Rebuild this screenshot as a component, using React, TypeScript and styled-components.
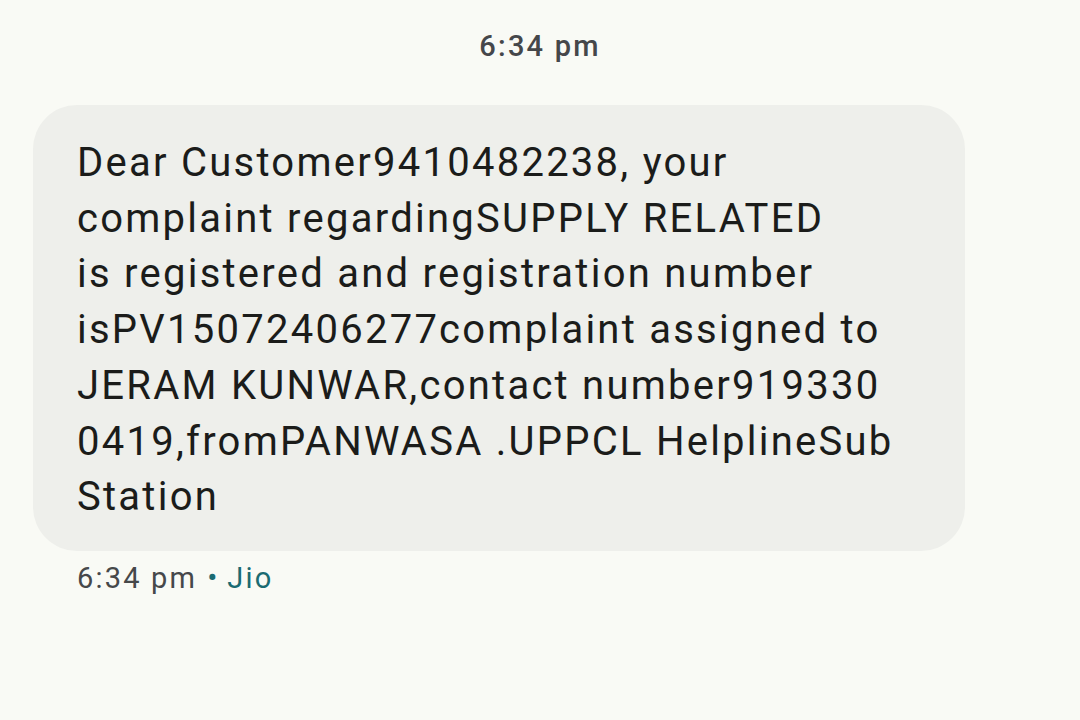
import React from "react";
import styled, { createGlobalStyle } from "styled-components";

const GlobalStyle = createGlobalStyle`
  html, body {
    margin: 0;
    padding: 0;
    background: #f9faf5;
  }
  body {
    font-family: Roboto, "Noto Sans", Arial, sans-serif;
    -webkit-font-smoothing: antialiased;
  }
`;

const Page = styled.div`
  width: 1080px;
  height: 720px;
  box-sizing: border-box;
  background: #f9faf5;
  padding: 28px 0 0 33px;
  display: flex;
  flex-direction: column;
  align-items: flex-start;
`;

const DayTime = styled.div`
  align-self: stretch;
  margin-left: -33px;
  text-align: center;
  font-size: 29px;
  letter-spacing: 2.2px;
  line-height: 36px;
  font-weight: 500;
  color: #45474a;
  margin-bottom: 41px;
`;

const Bubble = styled.div`
  width: 932px;
  box-sizing: border-box;
  background: #eeefeb;
  border-radius: 44px;
  padding: 30px 20px 26px 44px;
  color: #1b1c1a;
  font-size: 40px;
  letter-spacing: 2.25px;
  line-height: 55.7px;
  font-weight: 400;
`;

const Line = styled.div`
  white-space: nowrap;
`;

const Meta = styled.div`
  margin-top: 9px;
  margin-left: 44px;
  font-size: 29px;
  letter-spacing: 2.2px;
  line-height: 36px;
  color: #46484a;
  display: flex;
  align-items: center;
  gap: 10px;
`;

const Dot = styled.span`
  color: #1b6b72;
  font-size: 30px;
  letter-spacing: 0;
`;

const Carrier = styled.span`
  color: #1b6b72;
`;

const lines = [
  "Dear Customer9410482238, your",
  "complaint regardingSUPPLY RELATED",
  "is registered and registration number",
  "isPV15072406277complaint assigned to",
  "JERAM KUNWAR,contact number919330",
  "0419,fromPANWASA .UPPCL HelplineSub",
  "Station",
];

export default function App() {
  return (
    <>
      <GlobalStyle />
      <Page>
        <DayTime>6:34 pm</DayTime>
        <Bubble>
          {lines.map((l, i) => (
            <Line key={i}>{l}</Line>
          ))}
        </Bubble>
        <Meta>
          <span>6:34 pm</span>
          <Dot>•</Dot>
          <Carrier>Jio</Carrier>
        </Meta>
      </Page>
    </>
  );
}
